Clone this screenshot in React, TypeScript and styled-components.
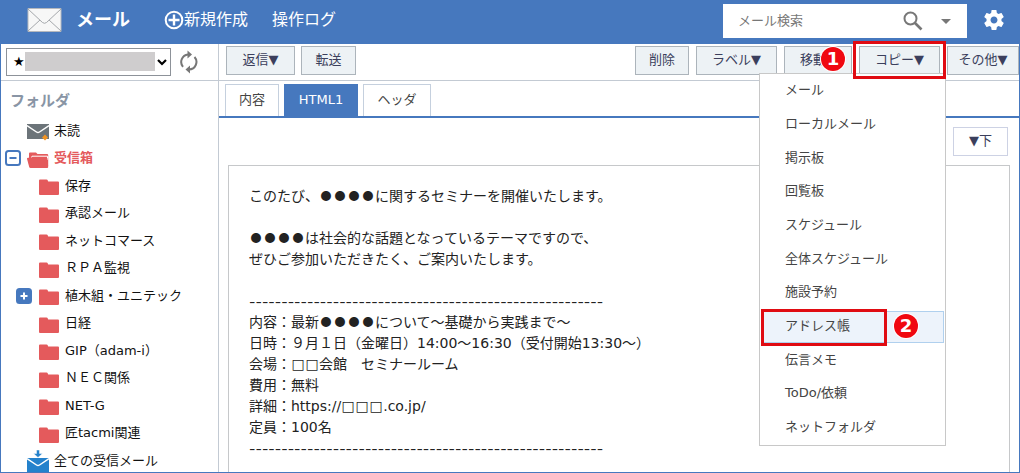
import React from "react";
import styled, { createGlobalStyle, css } from "styled-components";

const blue = "#4678be";
const red = "#e45a5c";

const GlobalStyle = createGlobalStyle`
  * { box-sizing: border-box; }
  body {
    margin: 0;
    overflow: hidden;
    background: #fff;
    color: #222;
    font: 13px/20px "DejaVu Sans", "Noto Sans CJK JP", sans-serif;
  }
  button, input, select { font: inherit; color: inherit; border-radius: 0; }
  svg { display: block; flex: none; }
`;

const Page = styled.div`
  display: flex;
  flex-direction: column;
  height: 100vh;
  border: solid ${blue};
  border-width: 0 1px 1px;
`;

const Header = styled.header`
  display: flex;
  flex: none;
  align-items: center;
  height: 44px;
  padding: 0 13px 4px 26px;
  background: ${blue};
  color: #fff;
`;

const Title = styled.h1`
  margin: 0 34px 0 14px;
  font-size: 18px;
  line-height: 24px;
`;

const HeaderLink = styled.a`
  display: flex;
  align-items: center;
  margin-right: 24px;
  color: #fff;
  font-size: 16px;
  line-height: 24px;
  text-decoration: none;
`;

const Search = styled.form`
  display: flex;
  align-items: center;
  gap: 18px;
  width: 244px;
  height: 34px;
  margin: 2px 15px 0 auto;
  padding-right: 16px;
  background: #fff;
  color: #666;
`;

const SearchInput = styled.input`
  flex: 1;
  min-width: 0;
  padding: 0 0 0 15px;
  border: 0;
  outline: 0;
  background: none;
  &::placeholder { color: #777; opacity: 1; }
`;

const IconButton = styled.button`
  display: flex;
  padding: 0;
  border: 0;
  background: none;
  color: inherit;
`;

const Columns = styled.div`
  display: flex;
  flex: 1;
  min-height: 0;
`;

const Sidebar = styled.aside`
  flex: none;
  width: 218px;
  overflow: hidden;
  border-right: 1px solid #c3cad3;
`;

const AccountBar = styled.div`
  display: flex;
  align-items: center;
  gap: 8px;
  height: 37px;
  padding-left: 5px;
  border-bottom: 1px solid #c3cad3;
  color: #666;
`;

const AccountField = styled.div`
  position: relative;
  width: 165px;
  height: 28px;
`;

const AccountSelect = styled.select`
  width: 100%;
  height: 100%;
  padding: 0 0 0 6px;
  appearance: none;
  border: 1px solid #8d9299;
  background: #fff;
  color: #000;
`;

const AccountMask = styled.span`
  position: absolute;
  inset: 4px 16px 5px 19px;
  background: #cfcdce;
  pointer-events: none;
`;

const SelectArrow = styled.svg`
  position: absolute;
  top: 10px;
  right: 4px;
  pointer-events: none;
`;

const SidebarTitle = styled.h2`
  margin: 10px 0 6px 9px;
  color: #8995a5;
  font-size: 15px;
  line-height: 20px;
`;

const FolderList = styled.ul`
  margin: 0;
  padding: 0;
  list-style: none;
`;

const FolderRow = styled.li<{ $level: number }>`
  display: flex;
  align-items: center;
  height: 27px;
  padding-left: ${(p) => (p.$level ? 15 : 4)}px;
  &:nth-child(even) { height: 28px; }
`;

const ToggleSlot = styled.span`
  flex: none;
  width: 22px;
`;

const FolderIcon = styled.span<{ $level: number }>`
  display: flex;
  flex: none;
  width: 27px;
  padding: 3px 0 0 ${(p) => p.$level}px;
`;

const FolderLink = styled.a<{ $active?: boolean }>`
  color: ${(p) => (p.$active ? red : "#111")};
  font-weight: ${(p) => (p.$active ? 700 : 400)};
  text-decoration: none;
  white-space: nowrap;
`;

const Main = styled.main`
  display: flex;
  flex: 1;
  flex-direction: column;
  min-width: 0;
`;

const Toolbar = styled.div`
  display: flex;
  flex: none;
  gap: 6px;
  height: 37px;
  padding: 2px 0 0 7px;
  border-bottom: 1px solid #c3cad3;
`;

const ToolbarGroup = styled.div`
  display: flex;
  align-items: flex-start;
  gap: 7px;
  margin-left: auto;
`;

const ToolButton = styled.button<{ $width: number }>`
  flex: none;
  width: ${(p) => p.$width}px;
  height: 29px;
  padding: 0 0 2px;
  border: 1px solid #acb4bb;
  background: #edf2f5;
  color: #3b3f5c;
  white-space: nowrap;
`;

const Anchor = styled.div`
  position: relative;
  display: flex;
`;

const Menu = styled.ul`
  position: absolute;
  z-index: 1;
  top: 27px;
  right: -6px;
  width: 187px;
  margin: 0;
  padding: 0;
  border: 1px solid #c8c8c8;
  background: #fff;
  list-style: none;
`;

const MenuRow = styled.li`
  display: flex;
  height: 34px;
  padding: 1px;
  &:nth-child(3n) { height: 33px; }
`;

const MenuItem = styled.button<{ $active?: boolean }>`
  position: relative;
  width: 100%;
  padding: 0 0 2px 23px;
  border: 1px solid transparent;
  background: none;
  color: #444;
  text-align: left;
  ${(p) => p.$active && css`
    border-color: #b0d0ee;
    background: #edf3fb;
  `}
`;

const Highlight = styled.span<{ $inset: string }>`
  position: absolute;
  z-index: 2;
  inset: ${(p) => p.$inset};
  border: 3px solid #e00b12;
  pointer-events: none;
`;

const Marker = styled.span<{ $left: number; $top: number }>`
  position: absolute;
  z-index: 3;
  left: ${(p) => p.$left}px;
  top: ${(p) => p.$top}px;
  width: 24px;
  height: 24px;
  border-radius: 50%;
  background: #f00810;
  box-shadow: 0 0 0 1px #fff;
  color: #fff;
  font: bold 18px/24px "DejaVu Sans", sans-serif;
  text-align: center;
`;

const Tabs = styled.div`
  display: flex;
  flex: none;
  gap: 5px;
  height: 37px;
  padding: 3px 0 0 6px;
  border-bottom: 2px solid ${blue};
`;

const Tab = styled.button<{ $width: number; $active?: boolean }>`
  width: ${(p) => p.$width}px;
  padding: 0 0 2px;
  border: 1px solid ${(p) => (p.$active ? blue : "#c5d0de")};
  border-bottom: 0;
  background: ${(p) => (p.$active ? blue : "#fff")};
  color: ${(p) => (p.$active ? "#fff" : "#444")};
`;

const JumpBar = styled.div`
  display: flex;
  flex: none;
  justify-content: flex-end;
  padding: 9px 11px 9px 0;
`;

const JumpButton = styled.button`
  width: 55px;
  height: 29px;
  padding: 0 0 2px;
  border: 1px solid #cdd2e4;
  background: #fff;
  color: #3b3f5c;
`;

const Message = styled.article`
  flex: 1;
  min-height: 0;
  margin: 0 9px;
  padding: 20px;
  overflow: hidden;
  border: 1px solid #c6c8ca;
  border-bottom: 0;
  font-size: 14px;
  line-height: 21px;
`;

const Line = styled.p`
  height: 21px;
  margin: 0;
  white-space: pre;
`;

const Rule = styled(Line)`
  font-family: Inter, sans-serif;
`;

const Symbol = styled.span`
  display: inline-block;
  width: 14px;
  text-align: center;
`;

const Dot = styled(Symbol)`
  font: 11px/14px "Noto Sans CJK JP", sans-serif;
  vertical-align: 1px;
`;

const EnvelopeIcon = () => (
  <svg width="35" height="24" viewBox="0 0 35 24">
    <path d="M1 .5h33v23H1z" fill="#f7f7f7" stroke="#b5b8bd" />
    <path d="M1 1l14.5 13.5q2 1.600 4 0L34 1M1 23l12-11M34 23L22 12" fill="none" stroke="#a5a8ac" />
  </svg>
);

const PlusCircleIcon = () => (
  <svg width="20" height="20" viewBox="0 0 20 20" fill="none" stroke="#fff" strokeWidth="2">
    <circle cx="10" cy="10" r="8.300" />
    <path d="M10 4.500v11M4.500 10h11" strokeWidth="2.400" />
  </svg>
);

const SearchIcon = () => (
  <svg width="20" height="20" viewBox="0 0 20 20" fill="none" stroke="#777" strokeWidth="2">
    <circle cx="7.500" cy="7.500" r="6" />
    <path d="M12 12l6.500 6.500" strokeWidth="2.600" />
  </svg>
);

const CaretIcon = () => (
  <svg width="10" height="5" viewBox="0 0 10 5"><path d="M0 0h10L5 5z" fill="#777" /></svg>
);

const GearIcon = () => (
  <svg width="24" height="24" viewBox="0 0 24 24">
    <path
      fill="#fff"
      d="M19.430 12.980c.04-.32.07-.64.07-.98s-.03-.66-.07-.98l2.110-1.650c.19-.15.24-.42.12-.64l-2-3.460c-.12-.22-.39-.3-.61-.22l-2.490 1c-.52-.4-1.080-.73-1.690-.98l-.38-2.650C14.460 2.180 14.250 2 14 2h-4c-.25 0-.46.18-.49.42l-.38 2.650c-.61.25-1.170.59-1.690.98l-2.490-1c-.23-.09-.49 0-.61.22l-2 3.460c-.13.22-.07.49.12.64l2.110 1.650c-.04.32-.07.65-.07.98s.03.66.07.98l-2.110 1.650c-.19.15-.24.42-.12.64l2 3.460c.12.22.39.3.61.22l2.490-1c.52.4 1.080.73 1.690.98l.38 2.650c.03.24.24.42.49.42h4c.25 0 .46-.18.49-.42l.38-2.650c.61-.25 1.170-.59 1.690-.98l2.490 1c.23.09.49 0 .61-.22l2-3.460c.12-.22.07-.49-.12-.64l-2.110-1.650zM12 15.500c-1.930 0-3.500-1.570-3.500-3.500s1.570-3.500 3.500-3.500 3.500 1.570 3.500 3.500-1.570 3.500-3.500 3.500z"
    />
  </svg>
);

const RefreshIcon = () => (
  <svg width="20" height="24" viewBox="0 0 20 24">
    <path d="M9 4.500A7.500 7.500 0 0 0 4 16.800M10 19.500A7.500 7.500 0 0 0 15.500 7" fill="none" stroke="#777" strokeWidth="2" />
    <path d="M8.500 0.500l4.500 4-4.500 4zM11 15.500l-4.500 4 4.500 4z" fill="#777" />
  </svg>
);

const ClosedFolder = () => (
  <svg width="20" height="16" viewBox="0 0 20 16">
    <path d="M0 1.500Q0 .5 1 .5h6.500q1 0 1.300 1l.4 1H19q1 0 1 1V15q0 1-1 1H1q-1 0-1-1z" fill={red} />
  </svg>
);

const OpenFolder = () => (
  <svg width="22" height="16" viewBox="0 0 22 16">
    <path d="M2 6V1.500q0-1 1-1h6l1.500 1.500H20q1.200 0 1.200 1V14H4z" fill={red} />
    <path d="M4.500 5.500L5 4.200h15.500V8" fill="none" stroke="#fff" />
    <path d="M0 6.800q-.1-1 1-1h18.500q.8 0 1 .8l.7 8.400q0 1-1 1H3.500q-1 0-1.300-1z" fill={red} />
  </svg>
);

const UnreadIcon = () => (
  <svg width="22" height="18" viewBox="0 0 22 18">
    <path d="M0 1h22v15H0z" fill="#6c7479" />
    <path d="M0 2.500l9.500 6.500q1.500 1 3 0L22 2.500" fill="none" stroke="#fff" strokeWidth="1.500" />
    <path d="M18 11.500l3 3-3 3-3-3z" fill="#f39422" />
  </svg>
);

const InboxAllIcon = () => (
  <svg width="22" height="24" viewBox="0 0 22 24">
    <path d="M0 8h22v16H0z" fill="#2482cc" />
    <path d="M0 8.500l9.500 6.500q1.500 1 3 0L22 8.500" fill="none" stroke="#fff" strokeWidth="1.500" />
    <path d="M9.500 0h3v3.500h3L11 7.500 6.500 3.500h3z" fill="#2482cc" stroke="#fff" strokeWidth=".5" />
  </svg>
);

const ToggleIcon = ({ open }: { open: boolean }) => (
  <svg width="16" height="16" viewBox="0 0 16 16">
    <rect x="1" y="1" width="14" height="14" rx="2.500" fill={open ? "#fff" : blue} stroke={blue} strokeWidth="2" />
    <path d={open ? "M4.500 8h7" : "M4.500 8h7M8 4.500v7"} stroke={open ? blue : "#fff"} strokeWidth="2" />
  </svg>
);

type Folder = { name: string; level: number; icon: React.ReactNode; open?: boolean; active?: boolean };

const leaf = (name: string): Folder => ({ name, level: 1, icon: <ClosedFolder /> });

const folders: Folder[] = [
  { name: "未読", level: 0, icon: <UnreadIcon /> },
  { name: "受信箱", level: 0, icon: <OpenFolder />, open: true, active: true },
  leaf("保存"),
  leaf("承認メール"),
  leaf("ネットコマース"),
  leaf("ＲＰＡ監視"),
  { ...leaf("植木組・ユニテック"), open: false },
  leaf("日経"),
  leaf("GIP（adam-i）"),
  leaf("ＮＥＣ関係"),
  leaf("NET-G"),
  leaf("匠tacmi関連"),
  { name: "全ての受信メール", level: 0, icon: <InboxAllIcon /> },
];

const copyTargets = [
  "メール", "ローカルメール", "掲示板", "回覧板", "スケジュール", "全体スケジュール",
  "施設予約", "アドレス帳", "伝言メモ", "ToDo/依頼", "ネットフォルダ",
];

const divider = "-".repeat(55);

const message = [
  "このたび、●●●●に関するセミナーを開催いたします。",
  "",
  "●●●●は社会的な話題となっているテーマですので、",
  "ぜひご参加いただきたく、ご案内いたします。",
  "",
  divider,
  "内容：最新●●●●について～基礎から実践まで～",
  "日時：９月１日（金曜日）14:00～16:30（受付開始13:30～）",
  "会場：□□会館　セミナールーム",
  "費用：無料",
  "詳細：https://□□□.co.jp/",
  "定員：100名",
  divider,
];

const withSymbols = (text: string) =>
  text.split(/([●□])/).map((part, i) => {
    if (part === "●") return <Dot key={i}>{part}</Dot>;
    if (part === "□") return <Symbol key={i}>{part}</Symbol>;
    return part;
  });

export default function App() {
  return (
    <Page lang="ja">
      <GlobalStyle />
      <Header>
        <EnvelopeIcon />
        <Title>メール</Title>
        <HeaderLink href="#new"><PlusCircleIcon />新規作成</HeaderLink>
        <HeaderLink href="#log">操作ログ</HeaderLink>
        <Search onSubmit={(e) => e.preventDefault()}>
          <SearchInput type="text" placeholder="メール検索" aria-label="メール検索" />
          <IconButton type="submit" aria-label="検索"><SearchIcon /></IconButton>
          <IconButton type="button" aria-label="検索条件"><CaretIcon /></IconButton>
        </Search>
        <IconButton type="button" aria-label="設定"><GearIcon /></IconButton>
      </Header>
      <Columns>
        <Sidebar>
          <AccountBar>
            <AccountField>
              <AccountSelect aria-label="アカウント"><option>★</option></AccountSelect>
              <AccountMask />
              <SelectArrow width="10" height="8" viewBox="0 0 10 8">
                <path d="M1 2l4 4 4-4" fill="none" stroke="#000" strokeWidth="2.200" />
              </SelectArrow>
            </AccountField>
            <IconButton type="button" aria-label="更新"><RefreshIcon /></IconButton>
          </AccountBar>
          <SidebarTitle>フォルダ</SidebarTitle>
          <FolderList>
            {folders.map((f) => (
              <FolderRow key={f.name} $level={f.level}>
                <ToggleSlot>
                  {f.open !== undefined && (
                    <IconButton type="button" aria-label={f.name} aria-expanded={f.open}>
                      <ToggleIcon open={f.open} />
                    </IconButton>
                  )}
                </ToggleSlot>
                <FolderIcon $level={f.level}>{f.icon}</FolderIcon>
                <FolderLink href="#folder" $active={f.active}>{f.name}</FolderLink>
              </FolderRow>
            ))}
          </FolderList>
        </Sidebar>
        <Main>
          <Toolbar>
            <ToolButton $width={69}>返信▼</ToolButton>
            <ToolButton $width={55}>転送</ToolButton>
            <ToolbarGroup>
              <ToolButton $width={54}>削除</ToolButton>
              <ToolButton $width={81}>ラベル▼</ToolButton>
              <Anchor>
                <ToolButton $width={68}>移動▼</ToolButton>
                <Marker $left={37} $top={1}>1</Marker>
              </Anchor>
              <Anchor>
                <ToolButton $width={81}>コピー▼</ToolButton>
                <Highlight $inset="-5px -6px -4px" />
                <Menu>
                  {copyTargets.map((name) => {
                    const active = name === "アドレス帳";
                    return (
                      <MenuRow key={name}>
                        <MenuItem $active={active}>
                          {name}
                          {active && <Highlight $inset="-3px 56px -4px -1px" />}
                          {active && <Marker $left={132} $top={2}>2</Marker>}
                        </MenuItem>
                      </MenuRow>
                    );
                  })}
                </Menu>
              </Anchor>
              <ToolButton $width={72}>その他▼</ToolButton>
            </ToolbarGroup>
          </Toolbar>
          <Tabs>
            <Tab $width={54}>内容</Tab>
            <Tab $width={74} $active>HTML1</Tab>
            <Tab $width={68}>ヘッダ</Tab>
          </Tabs>
          <JumpBar><JumpButton>▼下</JumpButton></JumpBar>
          <Message>
            {message.map((text, i) =>
              text === divider ? <Rule key={i}>{text}</Rule> : <Line key={i}>{withSymbols(text)}</Line>
            )}
          </Message>
        </Main>
      </Columns>
    </Page>
  );
}
